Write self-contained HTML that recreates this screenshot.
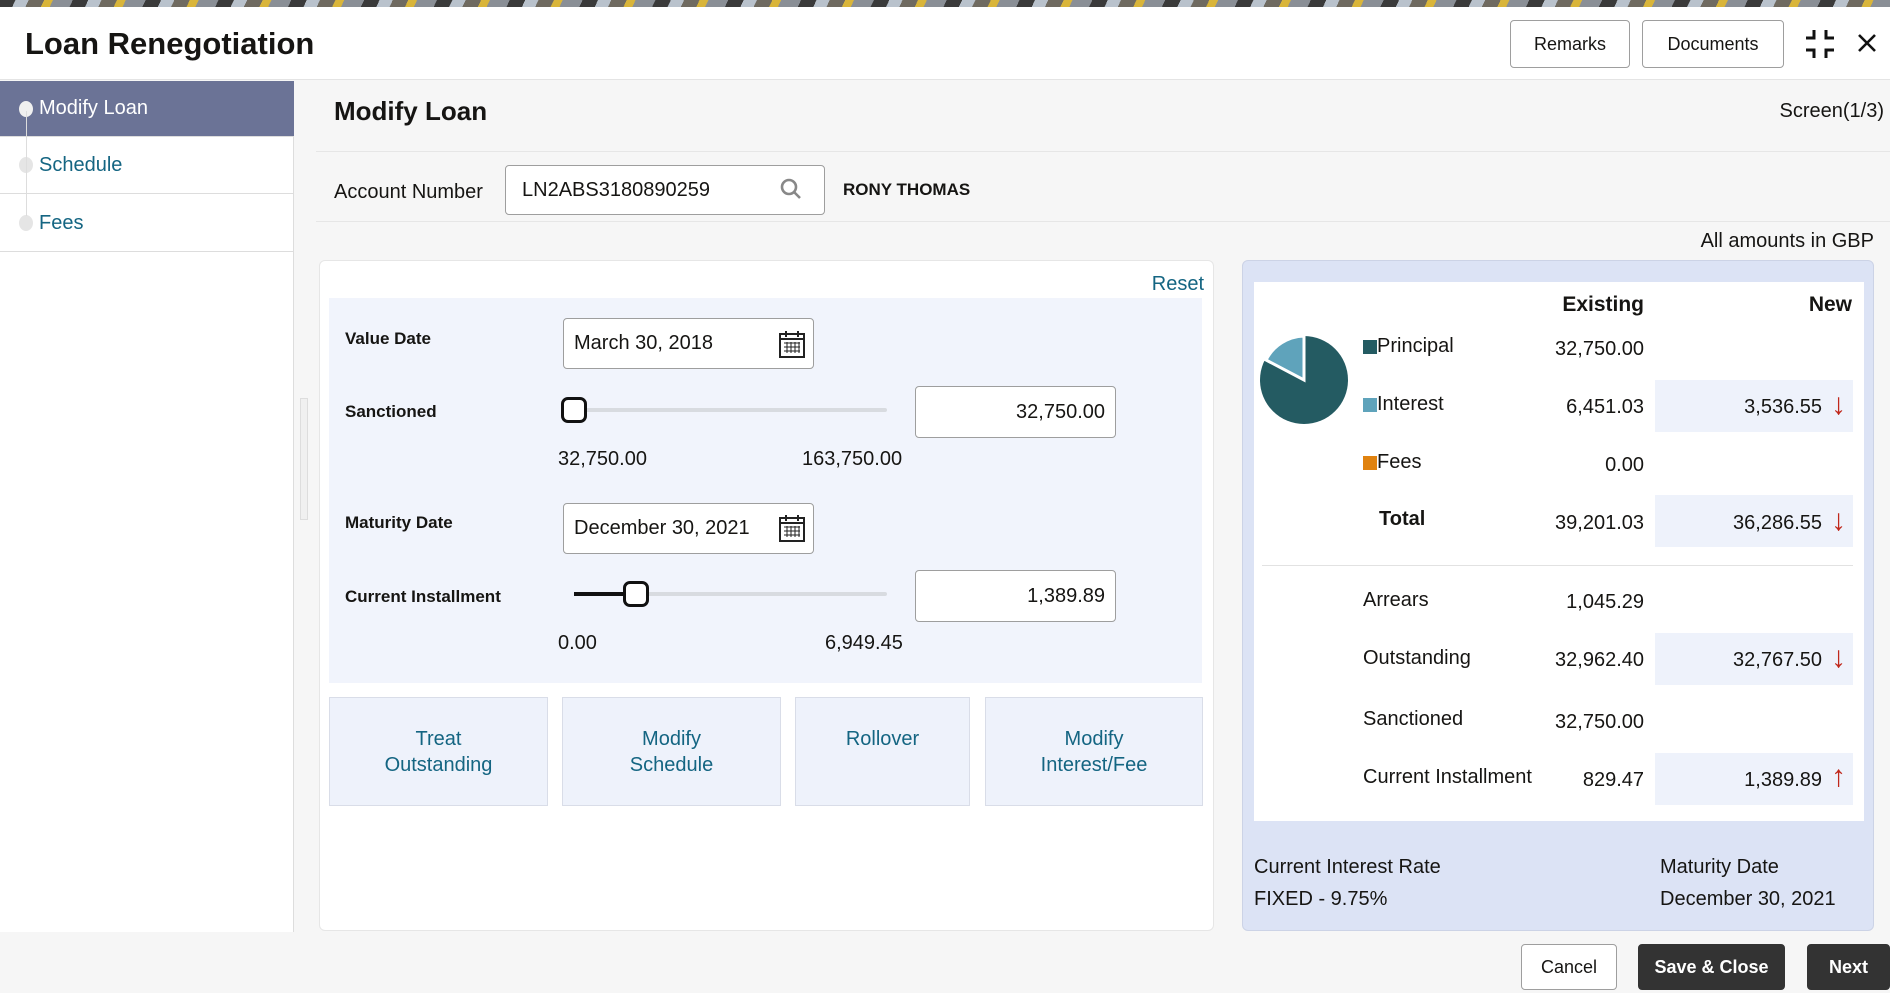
<!DOCTYPE html>
<html><head><meta charset="utf-8"><style>
*{box-sizing:border-box;margin:0;padding:0}
body{width:1890px;height:993px;position:relative;overflow:hidden;background:#f6f6f6;font-family:"Liberation Sans",sans-serif;color:#161513}
.a{position:absolute}
.top{left:0;top:0;width:1890px;height:7px;background:repeating-linear-gradient(115deg,#3a3a3a 0 14px,#b9c2cc 14px 26px,#6f6a60 26px 40px,#d9b53a 40px 48px,#8a8f96 48px 66px)}
.hdr{left:0;top:7px;width:1890px;height:73px;background:#fff;border-bottom:1px solid #e4e4e4}
.btn{border:1px solid #9e9e9e;border-radius:4px;background:#fff;font-size:18px;display:flex;align-items:center;justify-content:center}
.side{left:0;top:81px;width:294px;height:851px;background:#fff;border-right:1px solid #ddd}
.row{position:absolute;left:0;width:294px;height:57px;border-bottom:1px solid #ddd;font-size:20px;color:#146582;padding-left:39px;display:flex;align-items:center}
.dot{position:absolute;left:19px;top:20px;width:14px;height:16px;border-radius:50%;background:#e5e5e5}
.inp{background:#fff;border:1px solid #9e9e9e;border-radius:4px;font-size:20px;display:flex;align-items:center;padding:0 10px}
.lbl{font-size:17px;font-weight:bold;color:#161513}
.tb{background:#eef2fb;border:1px solid #d9dde8;color:#146582;font-size:20px;text-align:center;display:flex;align-items:center;justify-content:center;line-height:26px;padding-bottom:26px}
.r{font-size:20px;text-align:right}
.l{font-size:20px}
.nc{background:#eef2fb;left:1655px;width:198px;height:52px}
.arr{color:#c0281b;font-size:30px;line-height:30px}
</style></head><body>
<div class="a top"></div>
<div class="a hdr"></div>
<div class="a" style="left:25px;top:26px;font-size:31px;font-weight:bold">Loan Renegotiation</div>
<div class="a btn" style="left:1510px;top:20px;width:120px;height:48px">Remarks</div>
<div class="a btn" style="left:1642px;top:20px;width:142px;height:48px">Documents</div>
<svg class="a" style="left:1804px;top:28px" width="32" height="32" viewBox="0 0 32 32" fill="none" stroke="#111" stroke-width="3"><path d="M10 2v8H2M22 2v8h8M10 30v-8H2M22 30v-8h8"/></svg>
<svg class="a" style="left:1857px;top:33px" width="20" height="20" viewBox="0 0 20 20" stroke="#111" stroke-width="2.6"><path d="M2 2l16 16M18 2L2 18"/></svg>

<div class="a side">
 <div class="row" style="top:0;background:#6b7396;color:#fff;height:56px"><span class="dot" style="background:#f0f0f0"></span>Modify Loan</div>
 <div class="row" style="top:56px">Schedule<span class="dot"></span></div>
 <div class="row" style="top:114px">Fees<span class="dot"></span></div>
 <div class="a" style="left:26px;top:30px;width:1px;height:105px;background:#ddd"></div>
</div>

<div class="a" style="left:334px;top:96px;font-size:26px;font-weight:bold">Modify Loan</div>
<div class="a" style="right:6px;top:100px;font-size:20px">Screen(1/3)</div>
<div class="a" style="left:316px;top:151px;width:1574px;height:1px;background:#e6e6e6"></div>
<div class="a" style="left:316px;top:221px;width:1574px;height:1px;background:#e6e6e6"></div>
<div class="a l" style="left:334px;top:181px">Account Number</div>
<div class="a inp" style="left:505px;top:165px;width:320px;height:50px;padding-left:16px">LN2ABS3180890259</div>
<svg class="a" style="left:779px;top:177px" width="24" height="24" viewBox="0 0 24 24" fill="none" stroke="#888" stroke-width="2.6"><circle cx="10" cy="10" r="7"/><path d="M15 15l6 6"/></svg>
<div class="a" style="left:843px;top:180px;font-size:17px;font-weight:bold">RONY THOMAS</div>
<div class="a l" style="right:16px;top:230px">All amounts in GBP</div>

<div class="a" style="left:319px;top:260px;width:895px;height:671px;background:#fff;border:1px solid #e6e6e6;border-radius:6px"></div>
<div class="a" style="left:300px;top:398px;width:8px;height:122px;border:1px solid #ddd;background:#f0f0f0"></div>
<div class="a" style="right:686px;top:273px;font-size:20px;color:#146582">Reset</div>
<div class="a" style="left:329px;top:298px;width:873px;height:385px;background:#f1f4fc"></div>
<div class="a lbl" style="left:345px;top:329px">Value Date</div>
<div class="a inp" style="left:563px;top:318px;width:251px;height:51px">March 30, 2018</div>
<svg class="a" style="left:777px;top:329px" width="30" height="30" viewBox="0 0 30 30" fill="none" stroke="#222" stroke-width="2"><rect x="3" y="5" width="24" height="23"/><path d="M3 10h24M9 2v6M21 2v6"/><path d="M7 14h16M7 18h16M7 22h16M10 13v11M14 13v11M18 13v11M22 13v11" stroke-width="1"/></svg>
<div class="a lbl" style="left:345px;top:402px">Sanctioned</div>
<div class="a" style="left:574px;top:408px;width:313px;height:4px;background:#d8dbe0;border-radius:2px"></div>
<div class="a" style="left:561px;top:397px;width:26px;height:26px;border:3px solid #111;border-radius:7px;background:#fff"></div>
<div class="a inp" style="left:915px;top:386px;width:201px;height:52px;justify-content:flex-end">32,750.00</div>
<div class="a l" style="left:558px;top:448px">32,750.00</div>
<div class="a l" style="left:802px;top:448px">163,750.00</div>
<div class="a lbl" style="left:345px;top:513px">Maturity Date</div>
<div class="a inp" style="left:563px;top:503px;width:251px;height:51px">December 30, 2021</div>
<svg class="a" style="left:777px;top:513px" width="30" height="30" viewBox="0 0 30 30" fill="none" stroke="#222" stroke-width="2"><rect x="3" y="5" width="24" height="23"/><path d="M3 10h24M9 2v6M21 2v6"/><path d="M7 14h16M7 18h16M7 22h16M10 13v11M14 13v11M18 13v11M22 13v11" stroke-width="1"/></svg>
<div class="a lbl" style="left:345px;top:587px">Current Installment</div>
<div class="a" style="left:574px;top:592px;width:313px;height:4px;background:#d8dbe0;border-radius:2px"></div>
<div class="a" style="left:574px;top:592px;width:62px;height:4px;background:#111"></div>
<div class="a" style="left:623px;top:581px;width:26px;height:26px;border:3px solid #111;border-radius:7px;background:#fff"></div>
<div class="a inp" style="left:915px;top:570px;width:201px;height:52px;justify-content:flex-end">1,389.89</div>
<div class="a l" style="left:558px;top:632px">0.00</div>
<div class="a l" style="left:825px;top:632px">6,949.45</div>
<div class="a tb" style="left:329px;top:697px;width:219px;height:109px;padding-bottom:0">Treat<br>Outstanding</div>
<div class="a tb" style="left:562px;top:697px;width:219px;height:109px;padding-bottom:0">Modify<br>Schedule</div>
<div class="a tb" style="left:795px;top:697px;width:175px;height:109px">Rollover</div>
<div class="a tb" style="left:985px;top:697px;width:218px;height:109px;padding-bottom:0">Modify<br>Interest/Fee</div>

<div class="a" style="left:1242px;top:260px;width:632px;height:671px;background:#dce3f5;border:1px solid #ccd3e6;border-radius:6px"></div>
<div class="a" style="left:1254px;top:282px;width:610px;height:539px;background:#fff"></div>
<div class="a" style="right:246px;top:293px;font-size:21px;font-weight:bold">Existing</div>
<div class="a" style="right:38px;top:293px;font-size:21px;font-weight:bold">New</div>
<svg class="a" style="left:1258px;top:333px" width="92" height="92" viewBox="0 0 92 92"><circle cx="46" cy="47" r="44" fill="#245b62"/><path d="M46 47L46 3A44 44 0 0 0 8 27Z" fill="#5fa3bb" stroke="#fff" stroke-width="3"/></svg>
<div class="a" style="left:1363px;top:340px;width:14px;height:14px;background:#245b62"></div>
<div class="a l" style="left:1377px;top:335px">Principal</div>
<div class="a" style="left:1363px;top:398px;width:14px;height:14px;background:#5fa3bb"></div>
<div class="a l" style="left:1377px;top:393px">Interest</div>
<div class="a" style="left:1363px;top:456px;width:14px;height:14px;background:#e0820f"></div>
<div class="a l" style="left:1377px;top:451px">Fees</div>
<div class="a l" style="left:1379px;top:508px;font-weight:bold">Total</div>
<div class="a r" style="right:246px;top:338px">32,750.00</div>
<div class="a r" style="right:246px;top:396px">6,451.03</div>
<div class="a r" style="right:246px;top:454px">0.00</div>
<div class="a r" style="right:246px;top:512px">39,201.03</div>
<div class="a nc" style="top:380px"></div>
<div class="a nc" style="top:495px"></div>
<div class="a nc" style="top:633px"></div>
<div class="a nc" style="top:753px"></div>
<div class="a r" style="right:68px;top:396px">3,536.55</div>
<div class="a r" style="right:68px;top:512px">36,286.55</div>
<div class="a r" style="right:68px;top:649px">32,767.50</div>
<div class="a r" style="right:68px;top:769px">1,389.89</div>
<div class="a arr" style="left:1831px;top:390px">↓</div>
<div class="a arr" style="left:1831px;top:506px">↓</div>
<div class="a arr" style="left:1831px;top:643px">↓</div>
<div class="a arr" style="left:1831px;top:762px">↑</div>
<div class="a" style="left:1262px;top:565px;width:591px;height:1px;background:#e2e2e2"></div>
<div class="a l" style="left:1363px;top:589px">Arrears</div>
<div class="a l" style="left:1363px;top:647px">Outstanding</div>
<div class="a l" style="left:1363px;top:708px">Sanctioned</div>
<div class="a l" style="left:1363px;top:766px">Current Installment</div>
<div class="a r" style="right:246px;top:591px">1,045.29</div>
<div class="a r" style="right:246px;top:649px">32,962.40</div>
<div class="a r" style="right:246px;top:711px">32,750.00</div>
<div class="a r" style="right:246px;top:769px">829.47</div>
<div class="a l" style="left:1254px;top:856px">Current Interest Rate</div>
<div class="a l" style="left:1254px;top:888px">FIXED - 9.75%</div>
<div class="a l" style="left:1660px;top:856px">Maturity Date</div>
<div class="a l" style="left:1660px;top:888px">December 30, 2021</div>

<div class="a btn" style="left:1521px;top:944px;width:96px;height:46px">Cancel</div>
<div class="a btn" style="left:1638px;top:944px;width:147px;height:46px;background:#333;color:#fff;border-color:#333;font-weight:bold">Save &amp; Close</div>
<div class="a btn" style="left:1807px;top:944px;width:83px;height:46px;background:#333;color:#fff;border-color:#333;font-weight:bold">Next</div>
</body></html>
